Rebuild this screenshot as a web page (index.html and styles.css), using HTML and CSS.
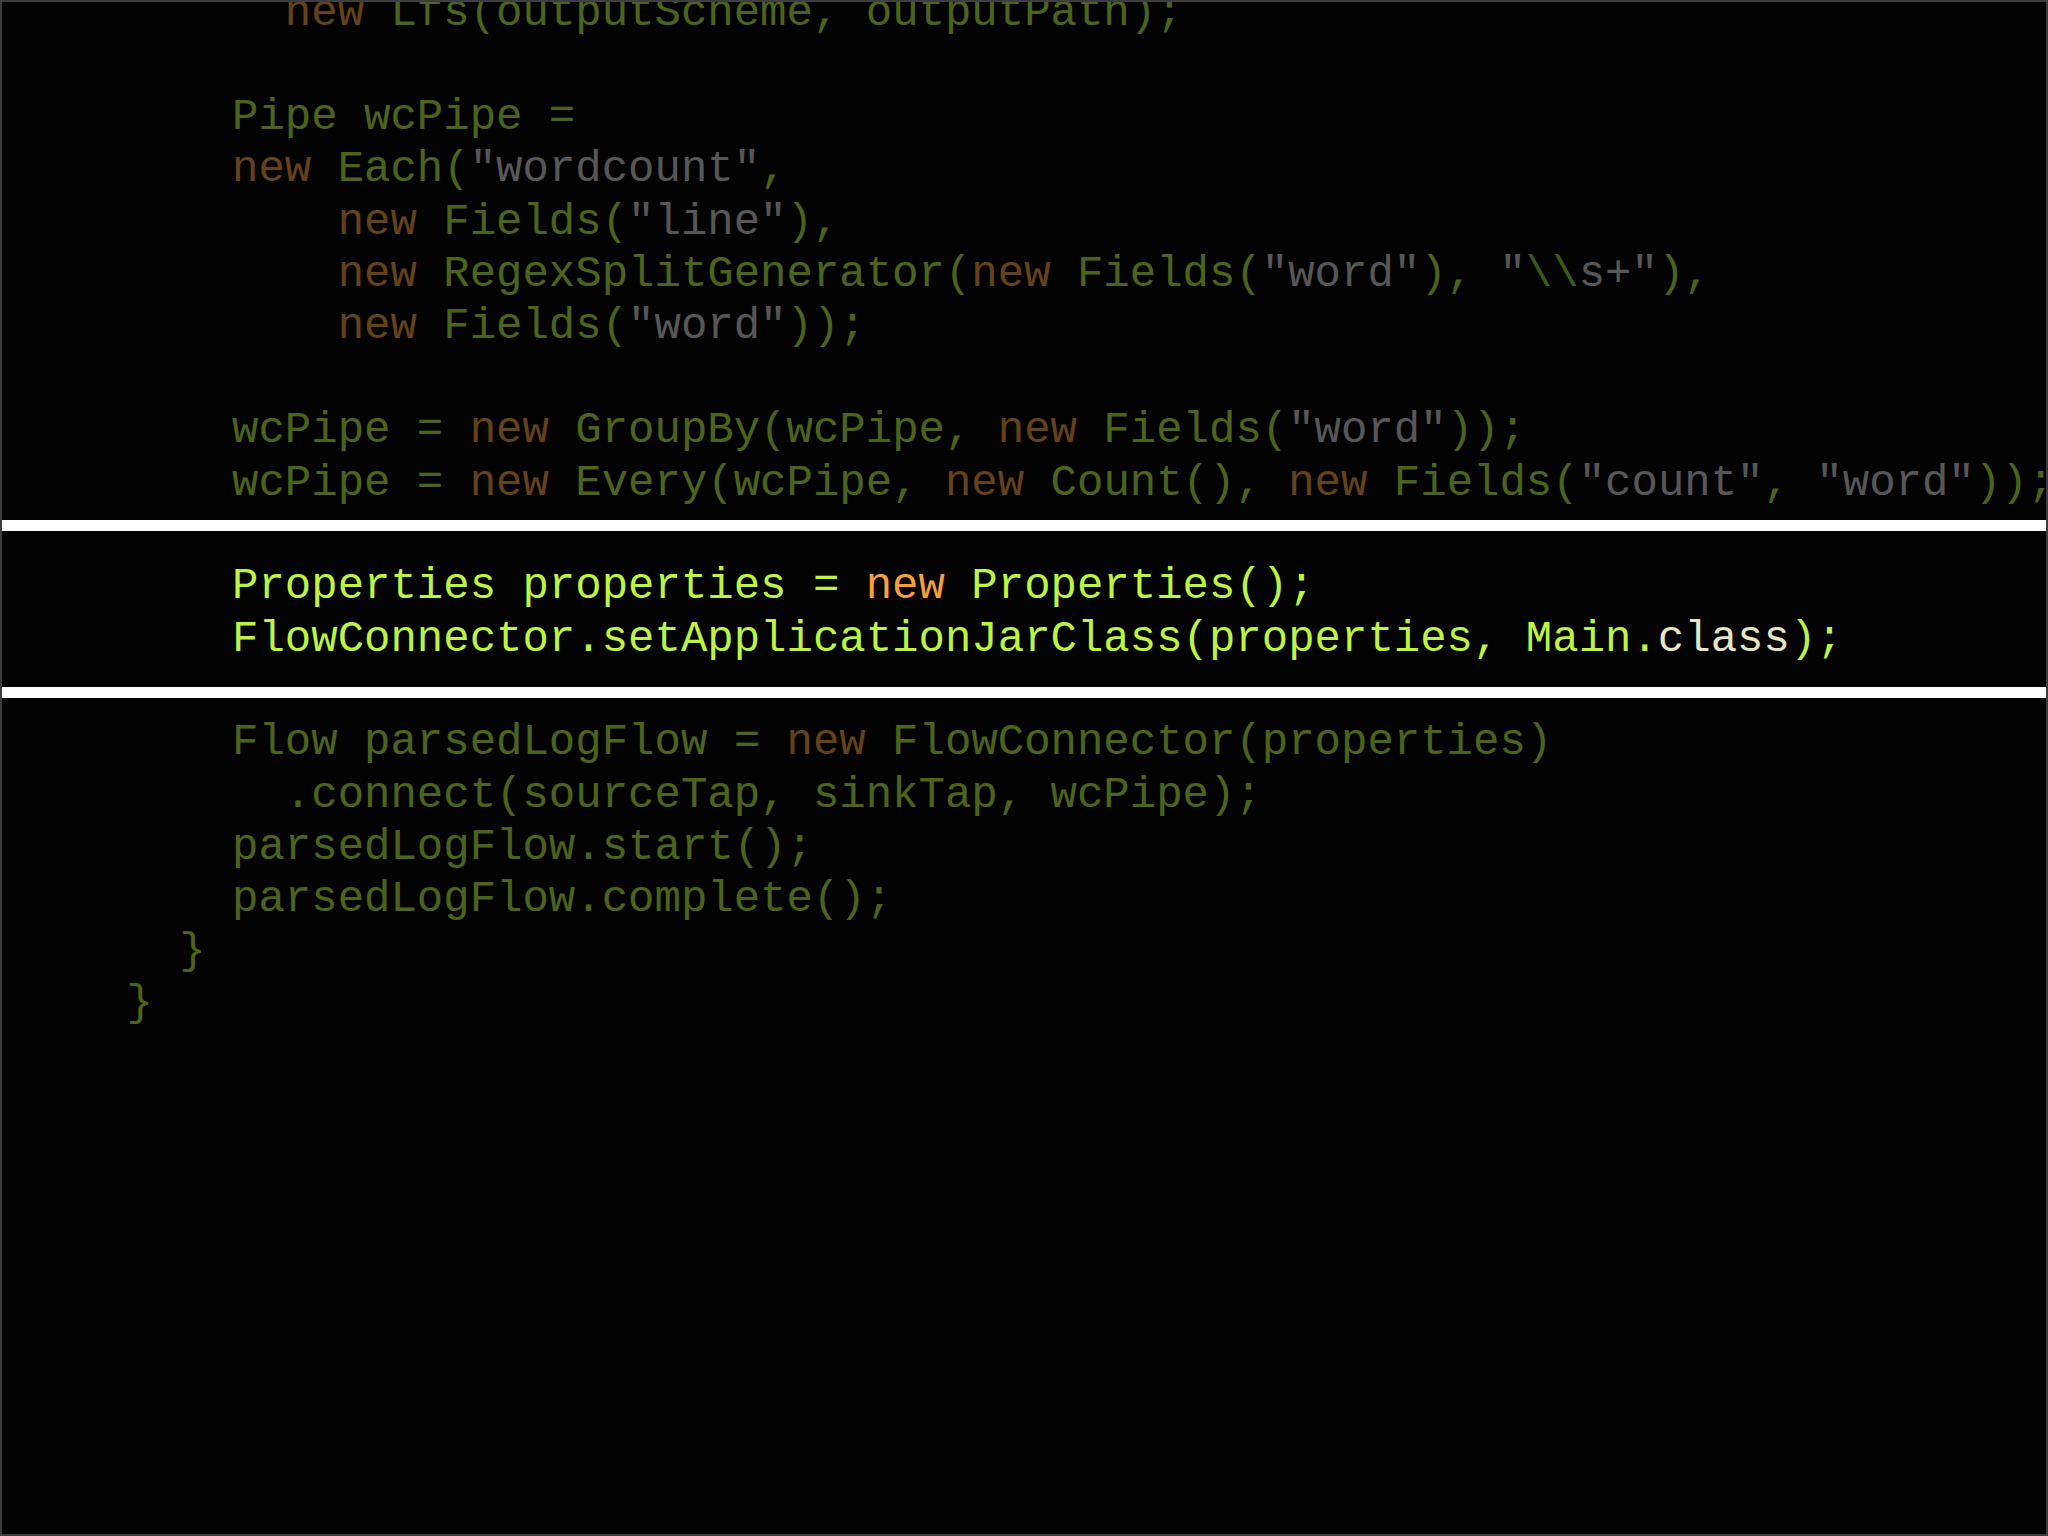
FILE: index.html
```html
<!DOCTYPE html>
<html lang="en">
<head>
  <meta charset="UTF-8">
  <meta name="viewport" content="width=device-width, initial-scale=1.0">
  <title>Cascading word count</title>
  <link rel="stylesheet" href="styles.css">
</head>
<body>
  <div class="slide">
    <div class="block dim first">
      <div class="line">      <span class="kw">new</span> Lfs(outputScheme, outputPath);</div>
      <div class="line"></div>
      <div class="line">    Pipe wcPipe =</div>
      <div class="line">    <span class="kw">new</span> Each(<span class="str">"wordcount"</span>,</div>
      <div class="line">        <span class="kw">new</span> Fields(<span class="str">"line"</span>),</div>
      <div class="line">        <span class="kw">new</span> RegexSplitGenerator(<span class="kw">new</span> Fields(<span class="str">"word"</span>), <span class="str">"</span><span class="esc">\\</span><span class="str">s+"</span>),</div>
      <div class="line">        <span class="kw">new</span> Fields(<span class="str">"word"</span>));</div>
      <div class="line"></div>
      <div class="line">    wcPipe = <span class="kw">new</span> GroupBy(wcPipe, <span class="kw">new</span> Fields(<span class="str">"word"</span>));</div>
      <div class="line">    wcPipe = <span class="kw">new</span> Every(wcPipe, <span class="kw">new</span> Count(), <span class="kw">new</span> Fields(<span class="str">"count"</span>, <span class="str">"word"</span>));</div>
    </div>
    <div class="block focus">
      <div class="line">    Properties properties = <span class="kw">new</span> Properties();</div>
      <div class="line">    FlowConnector.setApplicationJarClass(properties, Main.<span class="cls">class</span>);</div>
    </div>
    <div class="block dim last">
      <div class="line">    Flow parsedLogFlow = <span class="kw">new</span> FlowConnector(properties)</div>
      <div class="line">      .connect(sourceTap, sinkTap, wcPipe);</div>
      <div class="line">    parsedLogFlow.start();</div>
      <div class="line">    parsedLogFlow.complete();</div>
      <div class="line">  }</div>
      <div class="line">}</div>
    </div>
  </div>
</body>
</html>
```

FILE: styles.css
```css
body {
  margin: 0;
  background-color: #000;
}

.slide {
  box-sizing: border-box;
  width: 2048px;
  height: 1536px;
  border: 2px solid #3e3e3e;
  background-color: #030304;
  overflow: hidden;
}

.block {
  padding-left: 124.4px;
  font-family: "Liberation Mono", "DejaVu Sans Mono", monospace;
  font-size: 44px;
  line-height: 52.2px;
  color: #bdf444;
}

.line {
  height: 52.2px;
  white-space: pre;
}

.dim {
  opacity: 0.4;
}

.first {
  margin-top: -15.2px;
}

.focus {
  margin-top: 11.2px;
  padding-top: 29.5px;
  padding-bottom: 22.1px;
  border-top: 11px solid #fff;
  border-bottom: 11px solid #fff;
}

.last {
  padding-top: 18.5px;
}

.kw {
  color: #f6a03e;
}

.str {
  color: #d4d4d4;
}

.esc {
  color: #8fe03c;
}

.cls {
  color: #e6e6c6;
}
```
